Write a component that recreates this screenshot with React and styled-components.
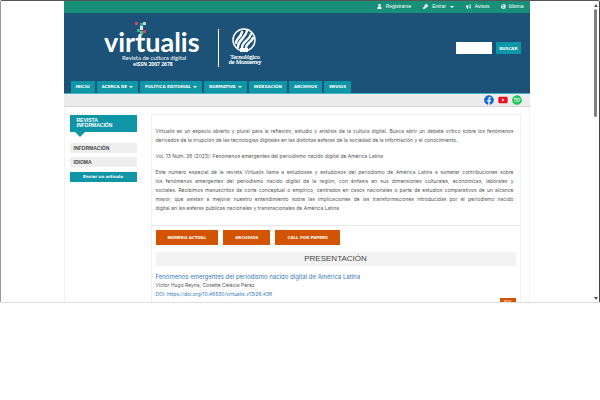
import React from "react";
import styled, { createGlobalStyle } from "styled-components";
import { FaUser, FaKey, FaBullhorn, FaGlobeAmericas, FaFacebook, FaYoutube, FaSpotify } from "react-icons/fa";

const GlobalStyle = createGlobalStyle`
  *, *::before, *::after { box-sizing: border-box; }
  body {
    margin: 0;
    background: #fff;
    color: #555;
    font-family: "Liberation Sans", Arial, sans-serif;
    font-size: 5px;
    line-height: 9px;
  }
  a { color: inherit; text-decoration: none; }
  ul { list-style: none; margin: 0; padding: 0; }
  h1, h2, h3, p { margin: 0; font-weight: 400; }
  button, input { font: inherit; margin: 0; border: 0; border-radius: 0; }
`;

const Screen = styled.div`
  display: flex;
  overflow: hidden;
  border: 1px solid #999;
  border-top-color: #555;
  border-right-color: #444;
  border-bottom-color: #dcdcdc;
  border-radius: 2px;
`;

const Viewport = styled.div`
  flex: 1;
  min-width: 0;
`;

const Page = styled.div`
  max-width: 466px;
  margin: 0 auto;
  border: solid #f3f3f3;
  border-width: 0 1px;
`;

const TopBar = styled.ul`
  display: flex;
  justify-content: flex-end;
  gap: 12px;
  height: 12px;
  padding: 0 6px;
  margin: 0 -1px;
  background: #188f78;
  color: #fff;
`;

const TopLink = styled.a`
  display: flex;
  align-items: center;
  gap: ${(p) => p.$gap || 3}px;
  height: 11px;
  svg { width: 5px; height: 5px; }
`;

const Caret = styled.i`
  display: inline-block;
  border: solid transparent;
  border-width: 2px 2px 0;
  border-top-color: #fff;
  margin-left: ${(p) => p.$space || 0}px;
  vertical-align: middle;
`;

const Header = styled.header`
  margin: 0 -1px;
  background: #1c5277;
  border-bottom: 1px solid #45b5c4;
`;

const Masthead = styled.div`
  display: flex;
  align-items: center;
  justify-content: space-between;
  height: 68px;
  padding: 2px 9px 0 40px;
`;

const Brand = styled.a`
  display: flex;
  color: #fff;
`;

const BrandArt = styled.svg`
  display: block;
  width: 170px;
  height: 54px;
  fill: #fff;
`;

const Search = styled.form`
  display: flex;
  gap: 4px;
`;

const SearchInput = styled.input`
  width: 36px;
  height: 12px;
  padding: 0 2px;
  background: #fff;
`;

const SearchButton = styled.button`
  height: 12px;
  padding: 0 3px;
  background: #0e96a7;
  color: #fff;
  font-family: "DejaVu Sans", sans-serif;
  font-size: 4px;
  font-weight: 700;
`;

const Tabs = styled.ul`
  display: flex;
  gap: 2px;
  padding-left: 7px;
`;

const Tab = styled.a`
  display: block;
  height: 12px;
  padding: 0 5px;
  background: #0e96a7;
  color: #fff;
  font-family: "DejaVu Sans", sans-serif;
  font-size: 4px;
  font-weight: 700;
  line-height: 11px;
  white-space: nowrap;
`;

const SocialBar = styled.div`
  display: flex;
  align-items: center;
  justify-content: flex-end;
  gap: 4px;
  height: 13px;
  padding-right: 8px;
  margin: 0 -1px;
  background: #ececec;
  border-bottom: 1px solid #d5d5d5;
  a { display: flex; }
  svg { width: 10px; height: 10px; }
`;

const Columns = styled.div`
  display: flex;
  gap: 14px;
  padding: 7px 8px 0 5px;
`;

const Sidebar = styled.aside`
  flex: none;
  width: 67px;
  padding-top: 1px;
`;

const SideTitle = styled.h2`
  position: relative;
  margin-bottom: 11px;
  padding: 3px 7px 4px;
  background: #0e96a7;
  color: #fff;
  font-size: 5px;
  font-weight: 700;
  line-height: 5px;
  &::after {
    content: "";
    position: absolute;
    left: 5px;
    top: 100%;
    border: solid transparent;
    border-width: 5px 5px 0;
    border-top-color: #0e96a7;
  }
`;

const SideLink = styled.a`
  display: block;
  margin-bottom: 4px;
  padding: 0 4px;
  background: #eee;
  color: #444;
  font-weight: 700;
  line-height: 10px;
`;

const SubmitLink = styled.a`
  display: block;
  margin-top: 5px;
  background: #0e96a7;
  color: #fff;
  font-family: "DejaVu Sans", sans-serif;
  font-size: 4px;
  font-weight: 700;
  line-height: 10px;
  text-align: center;
`;

const Main = styled.main`
  flex: 1;
  min-width: 0;
  border: 1px solid #f0f0f0;
  border-bottom: 0;
  font-family: Inter, sans-serif;
`;

const Intro = styled.section`
  display: flex;
  flex-direction: column;
  gap: 7px;
  padding: 12px 6px 12px 4px;
  border-bottom: 1px solid #e9e9e9;
`;

const Line = styled.span`
  display: block;
  text-align: justify;
  &:not(:last-child) { text-align-last: justify; }
`;

const Actions = styled.div`
  display: flex;
  gap: 5px;
  padding: 4px;
`;

const Action = styled.a`
  padding: 0 12px;
  background: #d35400;
  color: #fff;
  font-family: "DejaVu Sans", sans-serif;
  font-size: 4px;
  font-weight: 700;
  line-height: 15px;
`;

const SectionTitle = styled.h2`
  margin: 3px 4px 6px;
  background: #f3f3f3;
  color: #444;
  font-family: "Liberation Sans", Arial, sans-serif;
  font-size: 8px;
  line-height: 14px;
  text-align: center;
`;

const Article = styled.article`
  padding: 0 4px;
`;

const ArticleTitle = styled.h3`
  color: #337ab7;
  font-size: 6px;
  line-height: 9px;
`;

const Doi = styled.a`
  display: block;
  color: #337ab7;
  line-height: 8px;
`;

const Files = styled.div`
  display: flex;
  justify-content: flex-end;
  height: 4px;
  overflow: hidden;
`;

const FileLink = styled.a`
  height: 9px;
  padding: 0 4px;
  background: #d35400;
  color: #fff;
  font-size: 4px;
  line-height: 7px;
`;

const Scroll = styled.div`
  flex: none;
  display: flex;
  flex-direction: column;
  align-items: center;
  width: 7px;
  padding: 3px 0 2px;
`;

const ScrollArrow = styled.i`
  border: solid transparent;
  border-width: ${(p) => (p.$up ? "0 2px 3px" : "3px 2px 0")};
  border-${(p) => (p.$up ? "bottom" : "top")}-color: #555;
`;

const ScrollThumb = styled.div`
  width: 3px;
  height: 108px;
  margin: 2px 0 auto;
  border-radius: 2px;
  background: #808080;
`;

const tabs = [
  ["INICIO"], ["ACERCA DE", true], ["POLÍTICA EDITORIAL", true], ["NORMATIVA", true],
  ["INDEXACIÓN"], ["ARCHIVOS"], ["ENVIOS"],
];

const intro = [
  [
    "Virtualis es un espacio abierto y plural para la reflexión, estudio y análisis de la cultura digital. Busca abrir un debate crítico sobre los fenómenos",
    "derivados de la irrupción de las tecnologías digitales en las distintas esferas de la sociedad de la información y el conocimiento.",
  ],
  ["Vol. 13 Núm. 26 (2023): Fenómenos emergentes del periodismo nacido digital de América Latina"],
  [
    "Este número especial de la revista Virtualis llama a estudiosas y estudiosos del periodismo de América Latina a someter contribuciones sobre",
    "los fenómenos emergentes del periodismo nacido digital de la región, con énfasis en sus dimensiones culturales, económicas, laborales y",
    "sociales. Recibimos manuscritos de corte conceptual o empírico, centrados en casos nacionales o parte de estudios comparativos de un alcance",
    "mayor, que asistan a mejorar nuestro entendimiento sobre las implicaciones de las transformaciones introducidas por el periodismo nacido",
    "digital en las esferas públicas nacionales y transnacionales de América Latina",
  ],
];

function Logo() {
  return (
    <BrandArt viewBox="0 0 170 54" role="img" aria-label="Virtualis, Tecnológico de Monterrey">
      <g>
        <rect x="31" y="1" width="3" height="3" fill="#d8435f" />
        <rect x="36" y="2" width="3" height="3" fill="#39ae91" />
        <rect x="39" y="1" width="3" height="3" fill="#b9dbc0" />
        <rect x="36" y="5" width="3" height="4" fill="#dcefe6" />
        <rect x="33" y="8" width="3" height="3" fill="#39ae91" />
        <rect x="39" y="9" width="3" height="3" fill="#d8435f" />
        <rect x="36" y="10" width="3" height="4" fill="#58bd89" />
      </g>
      <text x="0" y="31" fontFamily="Lato" fontWeight="700" fontSize="27">virtualis</text>
      <text x="18" y="39" fontFamily="Lato" fontSize="6">Revista de cultura digital</text>
      <text x="29" y="45" fontFamily="Open Sans" fontWeight="700" fontSize="5">eISSN 2007 2678</text>
      <rect x="114" y="8" width="1" height="38" />
      <circle cx="140" cy="19" r="11" fill="none" stroke="#fff" strokeWidth="1.5" />
      <g fill="none" stroke="#fff" strokeWidth="2.4" strokeLinecap="round">
        <path d="M132 22c0-5 5-5 6-11" />
        <path d="M134 26c0-7 7-8 9-16" />
        <path d="M138 27c0-7 7-7 9-14" />
        <path d="M142 27c0-5 5-5 7-10" />
      </g>
      <path d="M136 27h8v4h-8z" />
      <text x="141" y="38" textAnchor="middle" fontFamily="Liberation Serif" fontSize="6" stroke="#fff" strokeWidth="0.2">Tecnológico</text>
      <text x="141" y="43" textAnchor="middle" fontFamily="Liberation Serif" fontSize="6" stroke="#fff" strokeWidth="0.2">de Monterrey</text>
    </BrandArt>
  );
}

export default function App() {
  return (
    <>
      <GlobalStyle />
      <Screen>
        <Viewport>
          <Page>
            <TopBar>
              <li><TopLink href="#registro" $gap={4}><FaUser />Registrarse</TopLink></li>
              <li><TopLink href="#entrar" $gap={4}><FaKey />Entrar<Caret /></TopLink></li>
              <li><TopLink href="#avisos" $gap={4}><FaBullhorn />Avisos</TopLink></li>
              <li><TopLink href="#idioma" $gap={2}><FaGlobeAmericas />Idioma</TopLink></li>
            </TopBar>
            <Header>
              <Masthead>
                <Brand href="#inicio"><Logo /></Brand>
                <Search onSubmit={(e) => e.preventDefault()}>
                  <SearchInput type="text" aria-label="Buscar" />
                  <SearchButton type="submit">BUSCAR</SearchButton>
                </Search>
              </Masthead>
              <nav>
                <Tabs>
                  {tabs.map(([label, menu]) => (
                    <li key={label}><Tab href="#menu">{label}{menu && <Caret $space={2} />}</Tab></li>
                  ))}
                </Tabs>
              </nav>
            </Header>
            <SocialBar>
              <a href="#facebook" aria-label="Facebook"><FaFacebook color="#1268e6" /></a>
              <a href="#youtube" aria-label="YouTube"><FaYoutube color="#e8101c" /></a>
              <a href="#spotify" aria-label="Spotify"><FaSpotify color="#1fc85b" /></a>
            </SocialBar>
            <Columns>
              <Sidebar>
                <SideTitle>REVISTA INFORMACIÓN</SideTitle>
                <SideLink href="#informacion">INFORMACIÓN</SideLink>
                <SideLink href="#idioma">IDIOMA</SideLink>
                <SubmitLink href="#envio">Enviar un artículo</SubmitLink>
              </Sidebar>
              <Main>
                <Intro>
                  {intro.map((lines) => (
                    <p key={lines[0]}>
                      {lines.map((line) => <Line key={line}>{line} </Line>)}
                    </p>
                  ))}
                </Intro>
                <Actions>
                  <Action href="#actual">NÚMERO ACTUAL</Action>
                  <Action href="#archivos">ARCHIVOS</Action>
                  <Action href="#call">CALL FOR PAPERS</Action>
                </Actions>
                <SectionTitle>PRESENTACIÓN</SectionTitle>
                <Article>
                  <ArticleTitle><a href="#articulo">Fenómenos emergentes del periodismo nacido digital de América Latina</a></ArticleTitle>
                  <p>Víctor Hugo Reyna, Cosette Celecia Pérez</p>
                  <Doi href="#doi">DOI: https://doi.org/10.46530/virtualis.v13i26.436</Doi>
                  <Files><FileLink href="#pdf">PDF</FileLink></Files>
                </Article>
              </Main>
            </Columns>
          </Page>
        </Viewport>
        <Scroll>
          <ScrollArrow $up />
          <ScrollThumb />
          <ScrollArrow />
        </Scroll>
      </Screen>
    </>
  );
}
